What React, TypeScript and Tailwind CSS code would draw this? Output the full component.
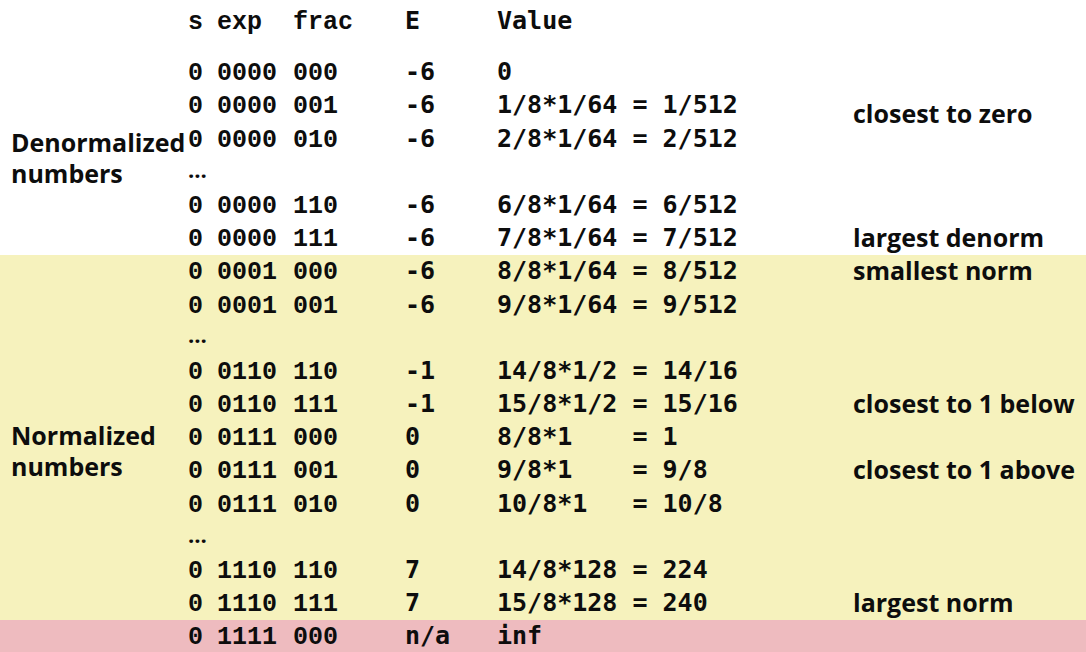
import React from "react";

type Row = { s?: string; exp?: string; frac?: string; e?: string; v?: string; note?: string; noteShift?: boolean; dots?: boolean };

const denorm: Row[] = [
  { s: "0", exp: "0000", frac: "000", e: "-6", v: "0" },
  { s: "0", exp: "0000", frac: "001", e: "-6", v: "1/8*1/64 = 1/512", note: "closest to zero", noteShift: true },
  { s: "0", exp: "0000", frac: "010", e: "-6", v: "2/8*1/64 = 2/512" },
  { dots: true },
  { s: "0", exp: "0000", frac: "110", e: "-6", v: "6/8*1/64 = 6/512" },
  { s: "0", exp: "0000", frac: "111", e: "-6", v: "7/8*1/64 = 7/512", note: "largest denorm" },
];

const norm: Row[] = [
  { s: "0", exp: "0001", frac: "000", e: "-6", v: "8/8*1/64 = 8/512", note: "smallest norm" },
  { s: "0", exp: "0001", frac: "001", e: "-6", v: "9/8*1/64 = 9/512" },
  { dots: true },
  { s: "0", exp: "0110", frac: "110", e: "-1", v: "14/8*1/2 = 14/16" },
  { s: "0", exp: "0110", frac: "111", e: "-1", v: "15/8*1/2 = 15/16", note: "closest to 1 below" },
  { s: "0", exp: "0111", frac: "000", e: "0", v: "8/8*1    = 1" },
  { s: "0", exp: "0111", frac: "001", e: "0", v: "9/8*1    = 9/8", note: "closest to 1 above" },
  { s: "0", exp: "0111", frac: "010", e: "0", v: "10/8*1   = 10/8" },
  { dots: true },
  { s: "0", exp: "1110", frac: "110", e: "7", v: "14/8*128 = 224" },
  { s: "0", exp: "1110", frac: "111", e: "7", v: "15/8*128 = 240", note: "largest norm" },
];

const inf: Row[] = [{ s: "0", exp: "1111", frac: "000", e: "n/a", v: "inf" }];

const LM = "text-[25px] font-bold font-['Liberation_Mono',monospace]";
const DJ = "text-[25px] font-bold font-['DejaVu_Sans_Mono',monospace]";
const SANS = "font-bold font-['Open_Sans','Noto_Sans',sans-serif]";

function Bits({ r }: { r: Row }) {
  return (
    <div className="flex w-[217px] shrink-0 gap-[14px] pt-[4px]">
      <span className={"w-[15px] " + LM}>{r.s}</span>
      <span className={"w-[62px] " + LM}>{r.exp}</span>
      <span className={LM}>{r.frac}</span>
    </div>
  );
}

function DataRow({ r }: { r: Row }) {
  if (r.dots) {
    return (
      <div className="flex h-[33.2px] items-center pb-[6px]">
        <span className={"text-[22px] leading-none " + SANS}>…</span>
      </div>
    );
  }
  return (
    <div className="flex h-[33.2px] items-center whitespace-pre">
      <Bits r={r} />
      <span className={"w-[92px] shrink-0 " + DJ}>{r.e}</span>
      <span className={"w-[356px] shrink-0 " + DJ}>{r.v}</span>
      {r.note && (
        <span className={"text-[25px] " + SANS + (r.noteShift ? " pt-[18px]" : "")}>{r.note}</span>
      )}
    </div>
  );
}

function Section({ rows, label, labelPad, bg }: { rows: Row[]; label?: string[]; labelPad: string; bg: string }) {
  return (
    <div className={"flex " + bg}>
      <div className="w-[188px] shrink-0">
        {label && (
          <div className={"pl-[11px] text-[25px] leading-[31px] " + SANS + " " + labelPad}>
            {label.map((l) => (
              <div key={l}>{l}</div>
            ))}
          </div>
        )}
      </div>
      <div className="flex flex-col">
        {rows.map((r, i) => (
          <DataRow key={i} r={r} />
        ))}
      </div>
    </div>
  );
}

export default function App() {
  return (
    <div className="w-[1086px] h-[652px] overflow-hidden bg-white text-[#0d0d0d]">
      <div className="flex h-[55.4px] items-start whitespace-pre">
        <div className="w-[188px] shrink-0" />
        <div className="flex w-[217px] shrink-0 gap-[14px] pt-[4px]">
          <span className={"w-[15px] " + LM}>s</span>
          <span className={"w-[62px] " + LM}>exp</span>
          <span className={LM}>frac</span>
        </div>
        <div className="flex pt-[2px]">
          <span className={"w-[92px] " + DJ}>E</span>
          <span className={DJ}>Value</span>
        </div>
      </div>
      <Section rows={denorm} label={["Denormalized", "numbers"]} labelPad="pt-[72px]" bg="bg-white" />
      <Section rows={norm} label={["Normalized", "numbers"]} labelPad="pt-[165px]" bg="bg-[#f6f2bd]" />
      <Section rows={inf} labelPad="" bg="bg-[#eebbbf]" />
    </div>
  );
}
